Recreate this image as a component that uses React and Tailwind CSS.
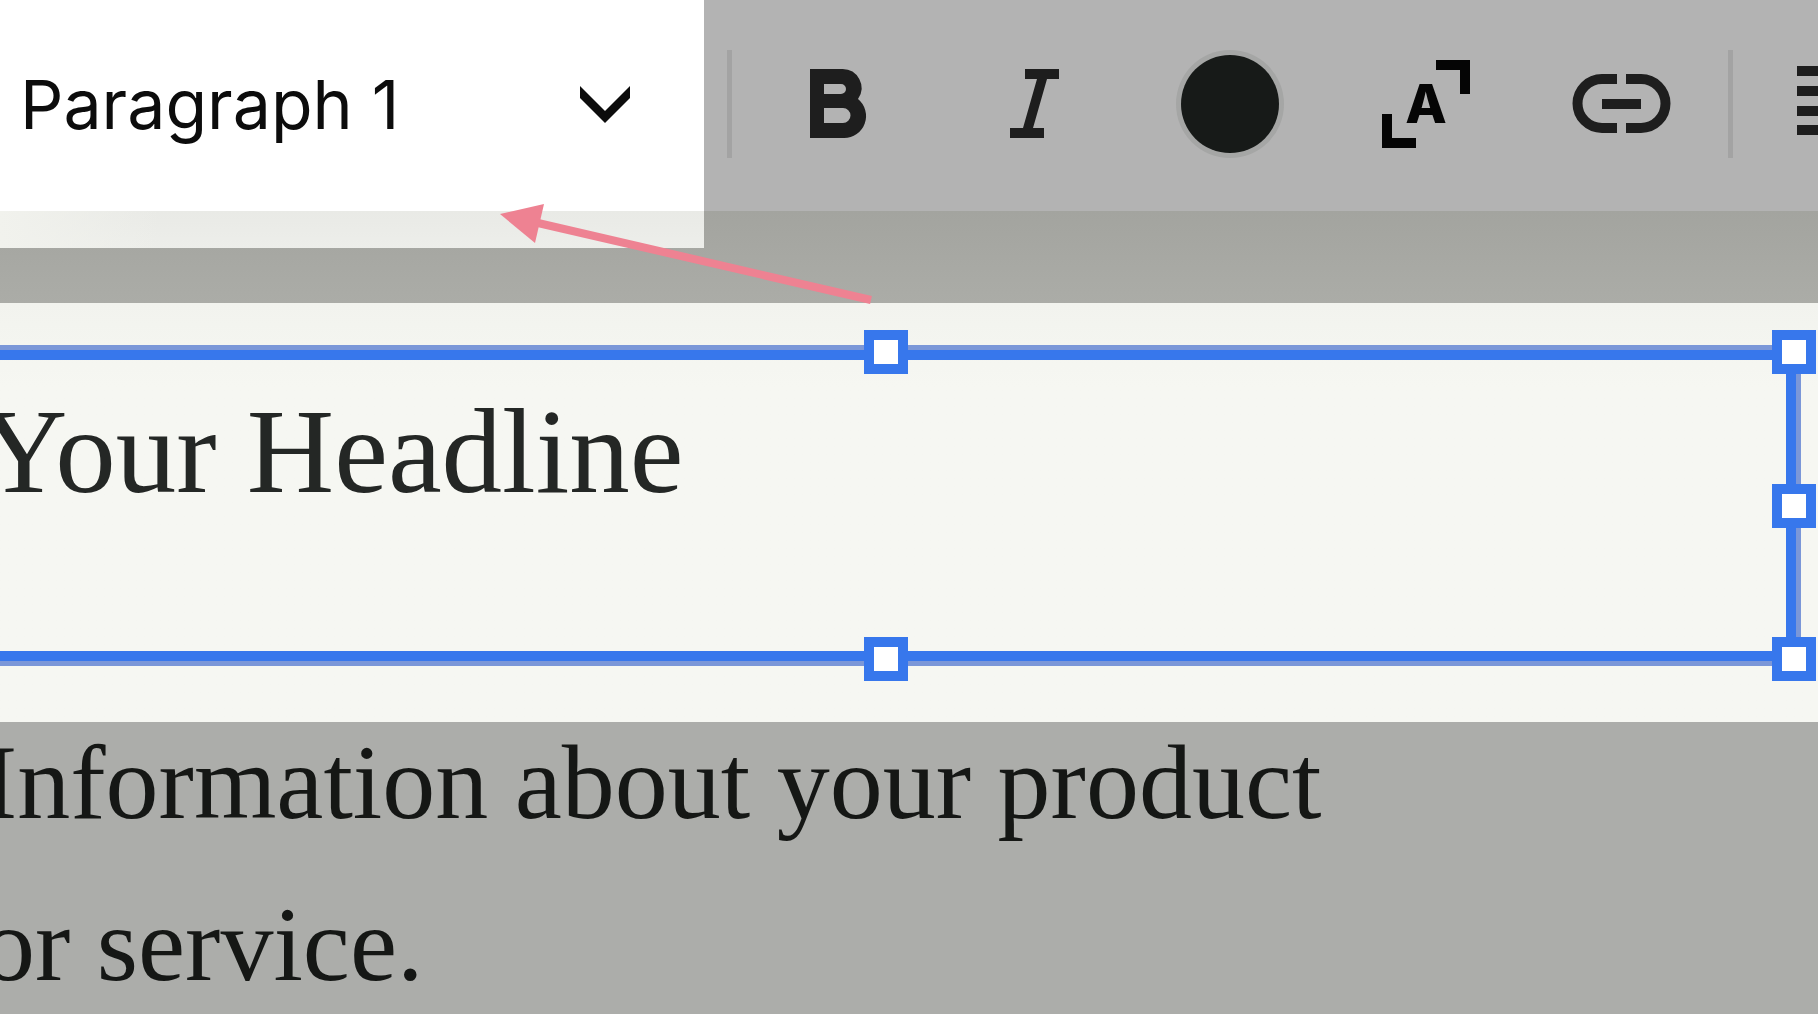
import React from 'react';

const ToolButton = ({ label, children }) => {
    return (
        <button type="button" aria-label={label} className="shrink-0 w-[118px] h-[118px]">
            <svg viewBox="0 0 118 118" className="w-full h-full" aria-hidden="true">
                {children}
            </svg>
        </button>
    )
}

const Divider = () => <div className="shrink-0 w-[5px] h-[108px] bg-[#a3a3a3]" />;

const Handle = ({ className }) => (
    <span className={`absolute size-[44px] border-[10px] border-[#3777ec] bg-white ${className}`} />
);

const StyleSelect = () => {
    return (
        <div className="relative shrink-0 w-[704px] h-full bg-white">
            <select
                aria-label="Text style"
                className="appearance-none w-full h-full pl-5 pb-1 bg-white text-[#0c0c0c] text-[68px] font-['Inter',sans-serif]"
            >
                <option>Paragraph 1</option>
            </select>
            <svg
                viewBox="0 0 50 38"
                className="absolute right-[74px] top-[86px] w-[50px] h-[38px] pointer-events-none"
                aria-hidden="true"
            >
                <path d="M0 0L25 25L50 0V12L25 37L0 12Z" fill="#0c0c0c" />
            </svg>
        </div>
    )
}

const Toolbar = () => {
    return (
        <header className="flex items-center h-[211px] bg-[#b3b3b3] text-[#1e1e1e]">
            <StyleSelect />
            <div className="flex items-center shrink-0 pl-[23px] pb-[3px]">
                <Divider />
                <div className="flex gap-[78px] px-[47px]">
                    <ToolButton label="Bold">
                        <path
                            fill="currentColor"
                            fillRule="evenodd"
                            d="M31 24H63A19 19 0 0 1 79 54A22 22 0 0 1 65 93H31ZM45 39V49H62A5 5 0 0 0 62 39ZM45 63V78H64A7.500 7.500 0 0 0 64 63Z"
                        />
                    </ToolButton>
                    <ToolButton label="Italic">
                        <path
                            fill="currentColor"
                            d="M50 24H84V34H72L58 83H69V93H35V83H48L62 34H50Z"
                        />
                    </ToolButton>
                    <ToolButton label="Text color">
                        <circle cx="59" cy="59" r="54" fill="#a5a6a5" />
                        <circle cx="59" cy="59" r="49" fill="#171a18" />
                    </ToolButton>
                    <ToolButton label="Text size">
                        <path fill="#050505" d="M69 15H103V49H93V25H69ZM15 69H25V93H49V103H15Z" />
                        <text
                            x="59"
                            y="78"
                            textAnchor="middle"
                            fill="#050505"
                            className="text-[54px] font-extrabold font-['Inter',sans-serif]"
                        >
                            A
                        </text>
                    </ToolButton>
                    <ToolButton label="Link">
                        <path
                            fill="none"
                            stroke="currentColor"
                            strokeWidth="10"
                            d="M54 34H39A24.500 24.500 0 0 0 39 83H54M63 34H78A24.500 24.500 0 0 1 78 83H63M39 59H78"
                        />
                    </ToolButton>
                </div>
                <Divider />
                <div className="pl-12">
                    <ToolButton label="Align">
                        <path
                            fill="currentColor"
                            d="M16 24H104V34H16ZM16 44H104V54H16ZM16 64H104V74H16ZM16 83H104V93H16Z"
                        />
                    </ToolButton>
                </div>
            </div>
        </header>
    )
}

const ToolbarShadow = () => {
    return (
        <div className="h-[92px] bg-linear-to-b from-[#a3a49f] to-[#abaca7]">
            <div className="w-[704px] h-[37px] bg-linear-to-b from-[#e9eae6] to-[#edeeea]">
                <div className="w-40 h-full bg-linear-to-r from-[#f1f2ed] to-[#f1f2ed]/0" />
            </div>
        </div>
    )
}

const Headline = () => {
    return (
        <section className="h-[419px] pt-[42px] pr-[17px] bg-[#f6f7f2] bg-linear-to-b from-[#f2f3ee] to-[#f6f7f2] to-20%">
            <div className="relative h-[321px] -ml-[29px] border-[5px] border-[#7b97d8]">
                <div className="h-full border-[10px] border-[#3777ec]">
                    <h1 className="pt-[25px] -ml-[6px] text-[121px] leading-[132px] text-[#242725]">
                        Your Headline
                    </h1>
                </div>
                <Handle className="-top-5 left-1/2 -translate-x-1/2" />
                <Handle className="-bottom-5 left-1/2 -translate-x-1/2" />
                <Handle className="-top-5 -right-5" />
                <Handle className="top-1/2 -right-5 -translate-y-1/2" />
                <Handle className="-bottom-5 -right-5" />
            </div>
        </section>
    )
}

const App = () => {
    return (
        <main className="relative flex flex-col h-screen overflow-hidden bg-[#acadaa] font-['Liberation_Serif',serif]">
            <Toolbar />
            <ToolbarShadow />
            <Headline />
            <section className="flex-1 min-h-0">
                <p className="-mt-5 -ml-[18px] text-[106px] leading-[162px] whitespace-nowrap text-[#151715]">
                    Information about your product
                    <br />
                    or service.
                </p>
            </section>

            {/* pointer from the headline to the style menu */}
            <svg
                viewBox="0 0 374 102"
                className="absolute left-[500px] top-[203px] w-[374px] h-[102px] pointer-events-none"
                aria-hidden="true"
            >
                <path d="M38 20L371 97" stroke="#ee8292" strokeWidth="8" />
                <path d="M0 11L44 1L35 40Z" fill="#ee8292" />
            </svg>
        </main>
    )
}

export default App;
